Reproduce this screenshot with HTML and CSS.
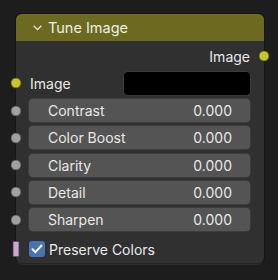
FILE: index.html
```html
<!DOCTYPE html>
<html>
<head>
<meta charset="utf-8">
<link rel="stylesheet" href="styles.css">
</head>
<body>
<div class="node">
  <div class="header">
    <svg class="chev" width="9" height="6" viewBox="0 0 9 6"><path d="M0.7 0.7 L4.5 4.6 L8.3 0.7" fill="none" stroke="#e8e8e0" stroke-width="1.3"/></svg>
    <span class="title">Tune Image</span>
  </div>
  <div class="body">
    <div class="row out">
      <span>Image</span>
      <i class="sock yellow right"></i>
    </div>
    <div class="row in-color">
      <i class="sock yellow left"></i>
      <span class="lbl">Image</span>
      <span class="swatch"></span>
    </div>
    <div class="row field-row"><i class="sock gray left"></i><div class="field"><span>Contrast</span><span>0.000</span></div></div>
    <div class="row field-row"><i class="sock gray left"></i><div class="field"><span>Color Boost</span><span>0.000</span></div></div>
    <div class="row field-row"><i class="sock gray left"></i><div class="field"><span>Clarity</span><span>0.000</span></div></div>
    <div class="row field-row"><i class="sock gray left"></i><div class="field"><span>Detail</span><span>0.000</span></div></div>
    <div class="row field-row"><i class="sock gray left"></i><div class="field"><span>Sharpen</span><span>0.000</span></div></div>
    <div class="row check-row">
      <i class="sock pink left"></i>
      <span class="cb"><svg width="12" height="10" viewBox="0 0 12 10"><path d="M1.5 5.2 L4.5 8.2 L10.5 1.5" fill="none" stroke="#fff" stroke-width="2" stroke-linecap="round" stroke-linejoin="round"/></svg></span>
      <span class="lbl">Preserve Colors</span>
    </div>
  </div>
</div>
</body>
</html>
```

FILE: styles.css
```css
html, body {
  margin: 0;
  padding: 0;
  background: #1d1d1d;
  width: 278px;
  height: 280px;
  overflow: hidden;
}
body {
  font-family: Inter, "Noto Sans", sans-serif;
  font-size: 14px;
  color: #e8e8e8;
  padding: 14px 0 0 16px;
  box-sizing: border-box;
}
.node {
  width: 248px;
  height: 249px;
  border-radius: 6px;
  background: #303030;
  box-shadow: 0 2px 0 -1px #242424, 0 4px 0 -2px #2a2a2a, 0 0 0 1px #161616;
  display: flex;
  flex-direction: column;
}
.header {
  height: 27px;
  background: #6c6a20;
  border-radius: 6px 6px 0 0;
  display: flex;
  align-items: center;
  padding-left: 17px;
  box-sizing: border-box;
  color: #eeeee6;
}
.chev { margin-right: 6px; margin-top: 1px; }
.title { font-size: 14.5px; }
.body {
  position: relative;
  display: flex;
  flex-direction: column;
  padding-top: 3px;
}
.row {
  position: relative;
  display: flex;
  align-items: center;
}
.out {
  height: 24px;
  justify-content: flex-end;
  padding-right: 14px;
}
.in-color {
  height: 30px;
  padding-left: 14px;
  padding-right: 14px;
  justify-content: space-between;
  margin-bottom: 1px;
}
.swatch {
  width: 126px;
  height: 23px;
  background: #000;
  border-radius: 4px;
  box-shadow: 0 0 0 1px #3a3a3a;
}
.field-row {
  height: 23px;
  margin-bottom: 4.3px;
  padding-left: 13px;
  padding-right: 14px;
}
.field {
  flex: 1;
  height: 23px;
  background: #545454;
  border-radius: 4px;
  box-shadow: 0 0 0 1px #3c3c3c;
  display: flex;
  align-items: center;
  justify-content: space-between;
  padding: 0 18px 0 19px;
  box-sizing: border-box;
}
.check-row {
  height: 24px;
  padding-left: 13px;
  margin-top: 2px;
}
.cb {
  width: 16px;
  height: 16px;
  background: #4772b3;
  border-radius: 3px;
  display: flex;
  align-items: center;
  justify-content: center;
  margin-right: 4px;
}
.sock {
  position: absolute;
  top: 50%;
  width: 11px;
  height: 11px;
  border-radius: 50%;
  transform: translate(-50%, -50%);
  box-sizing: border-box;
  border: 1px solid rgba(20, 20, 20, 0.6);
}
.left { left: 0; }
.right { left: 100%; }
.yellow { background: #c7c729; }
.gray { background: #a1a1a1; }
.pink {
  width: 7px;
  height: 16px;
  border-radius: 1px;
  background: #cca6d6;
}
```
